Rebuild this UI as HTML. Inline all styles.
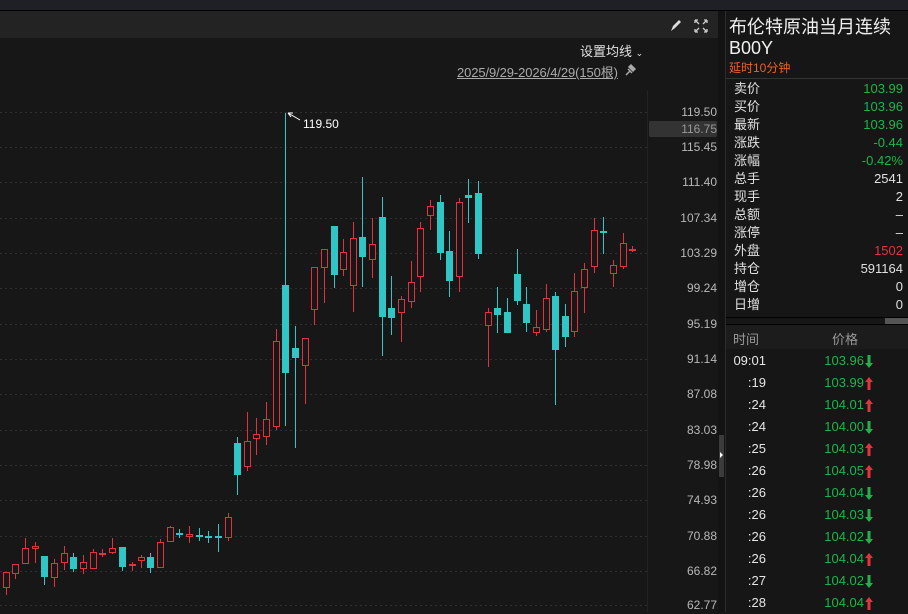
<!DOCTYPE html>
<html><head><meta charset="utf-8">
<style>
*{margin:0;padding:0;box-sizing:border-box}
body{width:908px;height:612px;overflow:hidden;background:#171717;font-family:"Liberation Sans","Noto Sans CJK SC",sans-serif;position:relative;color:#ddd}
.abs{position:absolute}
.ax{position:absolute;right:191px;font-size:12px;color:#b8b8b8;line-height:14px}
.row{position:absolute;left:734px;width:169px;height:18px;font-size:13px;line-height:18px;color:#e0e0e0}
.row span{position:absolute;right:0}
.g{color:#22b24c}.r{color:#e5323e}
.tr{position:absolute;left:734px;width:140px;height:22px;font-size:13px;line-height:22px;color:#e6e6e6}
.tr .t{position:absolute;right:108px}
.tr .p{position:absolute;right:10px;color:#22b24c}
.arr{position:absolute;right:-9px;top:5px;width:8px;height:13px}
</style></head><body>
<div class="abs" style="left:0;top:0;width:908px;height:10px;background:#1f2025"></div>
<div class="abs" style="left:0;top:10px;width:908px;height:1px;background:#000"></div>
<div class="abs" style="left:0;top:11px;width:720px;height:27px;background:#232323"></div>
<svg class="abs" style="left:668px;top:17px" width="48" height="18" viewBox="0 0 48 18">
<path d="M3 14 L5 9 L11 3 L13 5 L7 11 Z" fill="#ddd"/>
<g stroke="#ccc" stroke-width="1.3" fill="none">
<path d="M27 3 L31 7 M27 3 v3 M27 3 h3"/><path d="M39 3 L35 7 M39 3 v3 M39 3 h-3"/>
<path d="M27 15 L31 11 M27 15 v-3 M27 15 h3"/><path d="M39 15 L35 11 M39 15 v-3 M39 15 h-3"/>
</g></svg>
<div class="abs" style="left:580px;top:41px;font-size:13px;color:#e0e0e0">设置均线 <span style="font-size:9px">⌄</span></div>
<div class="abs" style="left:457px;top:62px;font-size:13px;color:#aaa;text-decoration:underline;letter-spacing:-0.1px">2025/9/29-2026/4/29(150根)</div>
<svg class="abs" style="left:623px;top:63px" width="14" height="14"><path d="M3 12 L7 8 M6 4 L10 8 L12 6 L8 2 Z M5 6 L9 10" stroke="#aaa" stroke-width="1.5" fill="#aaa"/></svg>

<svg class="abs" style="left:0;top:0" width="720" height="612">
<g stroke="#303030" stroke-dasharray="2 3" stroke-width="1">
<path d="M0 112.5H647M0 147.5H647M0 182.5H647M0 218.5H647M0 253.5H647M0 288.5H647M0 324.5H647M0 359.5H647M0 394.5H647M0 430.5H647M0 465.5H647M0 500.5H647M0 536.5H647M0 571.5H647M0 605.5H647"/>
</g>
<path d="M647.5 90V612" stroke="#222"/>
<rect x="649" y="121" width="68" height="16" rx="2" fill="#333"/>
<g id="c" stroke-width="1"></g>
<path d="M288 113 L300 120 M288 113 l5 0 M288 113 l3 4" stroke="#fff" fill="none"/>
<text x="303" y="128" fill="#fff" font-size="12" font-family="Liberation Sans">119.50</text>
</svg>
<div class="ax" style="top:105px">119.50</div>
<div class="ax" style="top:122px;color:#999">116.75</div>
<div class="ax" style="top:140px">115.45</div>
<div class="ax" style="top:175px">111.40</div>
<div class="ax" style="top:211px">107.34</div>
<div class="ax" style="top:246px">103.29</div>
<div class="ax" style="top:281px">99.24</div>
<div class="ax" style="top:317px">95.19</div>
<div class="ax" style="top:352px">91.14</div>
<div class="ax" style="top:387px">87.08</div>
<div class="ax" style="top:423px">83.03</div>
<div class="ax" style="top:458px">78.98</div>
<div class="ax" style="top:493px">74.93</div>
<div class="ax" style="top:529px">70.88</div>
<div class="ax" style="top:564px">66.82</div>
<div class="ax" style="top:598px">62.77</div>

<div class="abs" style="left:718px;top:11px;width:7px;height:601px;background:#131313"></div>
<div class="abs" style="left:725px;top:11px;width:1px;height:601px;background:#2c2c2c"></div>
<div class="abs" style="left:719px;top:435px;width:5px;height:42px;background:#3c3c3c"></div>
<div class="abs" style="left:720px;top:452px;width:0;height:0;border-left:3px solid #fff;border-top:3px solid transparent;border-bottom:3px solid transparent"></div>

<div class="abs" style="left:726px;top:11px;width:182px;height:601px;background:#161616"></div>
<div class="abs" style="left:729px;top:15px;font-size:18px;color:#f0f0f0;line-height:24px">布伦特原油当月连续</div>
<div class="abs" style="left:729px;top:37px;font-size:18px;color:#f0f0f0;line-height:22px">B00Y</div>
<div class="abs" style="left:729px;top:59px;font-size:12px;color:#e8622a">延时10分钟</div>
<div class="abs" style="left:726px;top:78px;width:182px;height:1px;background:#333"></div>
<div class="row" style="top:80px">卖价<span class="g">103.99</span></div>
<div class="row" style="top:98px">买价<span class="g">103.96</span></div>
<div class="row" style="top:116px">最新<span class="g">103.96</span></div>
<div class="row" style="top:134px">涨跌<span class="g">-0.44</span></div>
<div class="row" style="top:152px">涨幅<span class="g">-0.42%</span></div>
<div class="row" style="top:170px">总手<span>2541</span></div>
<div class="row" style="top:188px">现手<span>2</span></div>
<div class="row" style="top:206px">总额<span>–</span></div>
<div class="row" style="top:224px">涨停<span>–</span></div>
<div class="row" style="top:242px">外盘<span class="r">1502</span></div>
<div class="row" style="top:260px">持仓<span>591164</span></div>
<div class="row" style="top:278px">增仓<span>0</span></div>
<div class="row" style="top:296px">日增<span>0</span></div>
<div class="abs" style="left:726px;top:317px;width:182px;height:1px;background:#000"></div>
<div class="abs" style="left:885px;top:318px;width:23px;height:6px;background:#555"></div>
<div class="abs" style="left:726px;top:324px;width:182px;height:1px;background:#000"></div>
<div class="abs" style="left:726px;top:325px;width:182px;height:24px;background:#1c1c1c"></div>
<div class="abs" style="left:733px;top:329px;font-size:13px;color:#999">时间</div>
<div class="abs" style="left:832px;top:329px;font-size:13px;color:#999">价格</div>
<div id="tl"></div>

<script>
var d=[["u",6,572,588,572,595],["u",15,564,574,564,579],["u",25,548,564,538,564],["u",35,546,549,542,563],["d",44,556,577,556,585],["u",54,563,578,559,587],["u",64,553,563,546,570],["d",73,557,569,553,572],["u",83,562,569,555,574],["u",93,552,569,549,569],["u",102,553,554,549,557],["u",112,548,553,538,554],["d",122,547,567,547,571],["u",132,564,565,562,571],["u",141,557,561,555,568],["d",150,557,568,553,573],["u",160,542,568,539,568],["u",170,527,542,526,542],["d",179,533,534,529,538],["u",189,534,537,526,543],["d",199,535,536,528,541],["d",208,536,537,531,543],["d",218,536,537,524,552],["u",228,517,538,513,541],["d",237,443,475,437,495],["u",247,441,467,412,471],["u",256,434,439,418,455],["u",266,419,437,402,445],["u",276,341,427,329,430],["d",285,285,373,113,426],["d",295,348,358,326,448],["u",305,338,366,338,404],["u",314,267,310,267,325],["u",324,249,268,249,303],["d",334,226,275,226,288],["u",343,252,270,239,276],["u",353,238,286,222,312],["d",362,237,257,177,287],["u",372,244,260,218,278],["d",382,217,317,197,356],["d",391,308,318,276,335],["u",401,299,313,296,342],["u",411,282,302,261,308],["u",420,228,277,222,292],["u",430,206,216,200,230],["d",440,202,253,195,260],["d",449,251,281,231,297],["u",459,202,277,198,292],["d",468,195,198,179,223],["d",478,193,254,181,259],["u",488,312,326,308,367],["d",497,308,315,287,333],["d",507,312,333,298,333],["d",517,274,301,249,305],["d",526,304,323,287,332],["u",536,327,333,310,336],["u",546,298,330,284,332],["d",555,296,350,292,405],["d",565,316,337,304,347],["u",574,291,332,273,337],["u",584,269,288,263,313],["u",594,230,267,218,273],["d",603,231,232,217,254],["u",613,265,274,260,287],["u",623,243,267,233,269],["u",632,249,250,246,252]];
var s="";d.forEach(function(c){var col=c[0]=="u"?"#e2323e":"#31c6c6",x=c[1]+0.5;
s+='<path d="M'+x+' '+c[4]+'V'+c[5]+'" stroke="'+col+'"/>';
var h=c[3]-c[2];
if(h<=2){s+='<rect x="'+(c[1]-3)+'" y="'+c[2]+'" width="7" height="2" fill="'+col+'"/>';}
else if(c[0]=="u"){s+='<rect x="'+(c[1]-2.5)+'" y="'+(c[2]+0.5)+'" width="6" height="'+(h-1)+'" fill="#171717" stroke="'+col+'"/>';}
else{s+='<rect x="'+(c[1]-3)+'" y="'+c[2]+'" width="7" height="'+h+'" fill="'+col+'"/>';}});
document.getElementById("c").innerHTML=s;
var t=[["09:01","103.96",0],[":19","103.99",1],[":24","104.01",1],[":24","104.00",0],[":25","104.03",1],[":26","104.05",1],[":26","104.04",0],[":26","104.03",0],[":26","104.02",0],[":26","104.04",1],[":27","104.02",0],[":28","104.04",1]];
var h="";t.forEach(function(r,i){var a=r[2]?'<svg class="arr" viewBox="0 0 8 13"><path d="M4 0 L8 5 H5.5 V13 H2.5 V5 H0 Z" fill="#e5323e"/></svg>':'<svg class="arr" viewBox="0 0 8 13"><path d="M4 13 L8 8 H5.5 V0 H2.5 V8 H0 Z" fill="#22b24c"/></svg>';
h+='<div class="tr" style="top:'+(350+i*22)+'px"><span class="t">'+r[0]+'</span><span class="p">'+r[1]+a+'</span></div>';});
document.getElementById("tl").innerHTML=h;
</script>
</body></html>
